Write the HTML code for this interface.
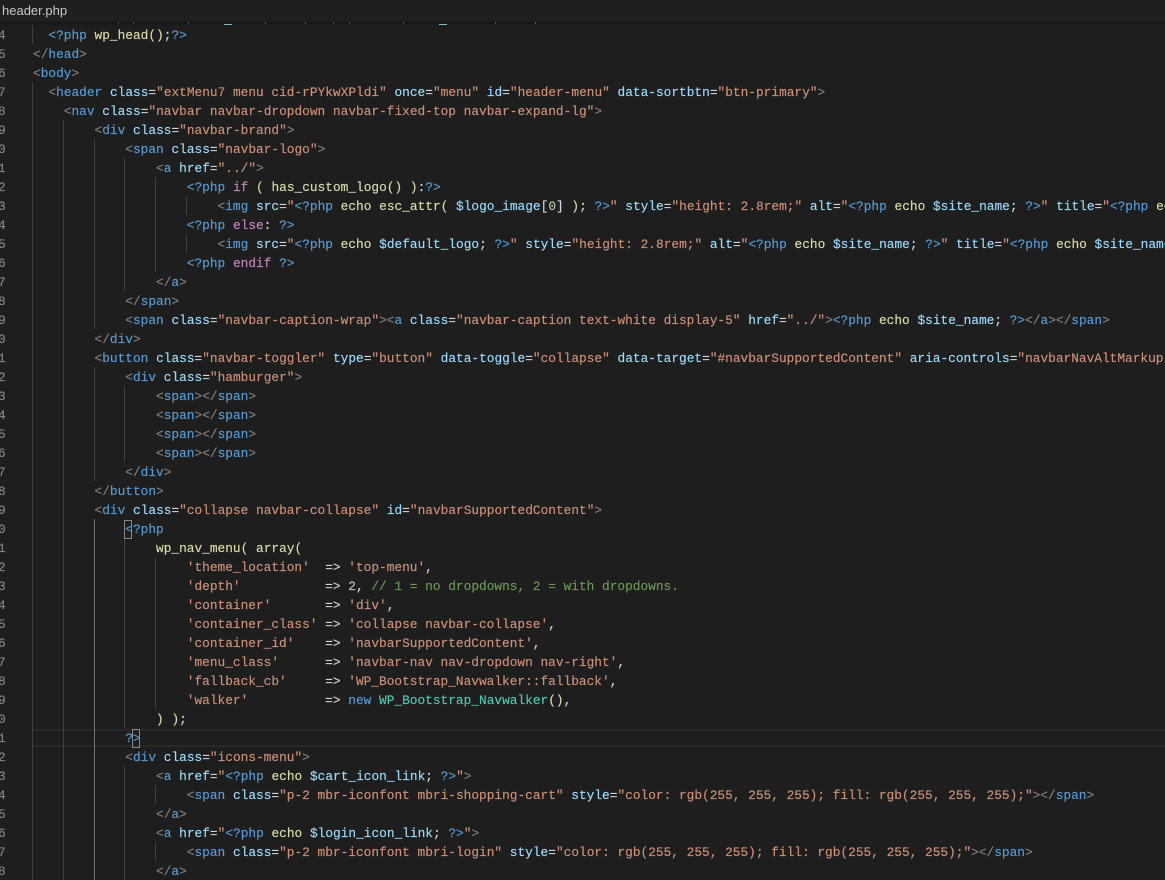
<!DOCTYPE html>
<html><head><meta charset="utf-8"><title>header.php</title>
<style>
html,body{margin:0;padding:0;width:1165px;height:880px;overflow:hidden;background:#1e1e1e}
#wrap{position:absolute;left:0;top:0;width:1165px;height:880px;overflow:hidden;background:#1e1e1e}
#tab{position:absolute;left:0;top:0;width:1165px;height:22px;background:#1f1f1f;color:#c8c8c8;font:13px/21px "Liberation Sans",sans-serif;padding-left:2px;box-sizing:border-box;z-index:5;box-shadow:0 1px 3px #111}
pre{position:absolute;margin:0;font-family:"Liberation Mono",monospace;font-size:12.825px;line-height:19px;color:#d4d4d4;-webkit-text-stroke:.15px currentColor}
#code{left:33px;top:-12.5px;width:1132px;overflow:hidden;height:892px;z-index:2}
#nums{left:-2px;top:6.5px;height:873px;overflow:hidden;color:#858585;z-index:2}
b{font-weight:normal}
.t{color:#569cd6}.a{color:#9cdcfe}.s{color:#ce9178}.p{color:#808080}.y{color:#dcdcaa}.k{color:#c586c0}.c{color:#6a9955}.n{color:#b5cea8}.g{color:#4ec9b0}
.gd{position:absolute;width:1px;background:#404040;z-index:1}
.ac{background:#707070}
.cur{position:absolute;left:33px;top:729px;width:1132px;height:18px;box-sizing:border-box;border-top:2px solid #282828;border-bottom:2px solid #282828;z-index:0}
.br{position:absolute;width:8px;height:19px;box-sizing:border-box;border:1px solid #888;z-index:3}
.bit{position:absolute;top:22px;height:2px;background:#569cd6;z-index:1}
</style></head><body><div id="wrap">
<div id="tab">header.php</div>
<div class="bit" style="left:118px;width:1px"></div><div class="bit" style="left:133px;width:1px"></div><div class="bit" style="left:188px;width:1px"></div><div class="bit" style="left:224px;width:8px;height:1px;top:24px;background:#9cdcfe"></div><div class="bit" style="left:265px;width:1px;background:#ce9178"></div><div class="bit" style="left:305px;width:1px;background:#ce9178"></div><div class="bit" style="left:333px;width:1px"></div><div class="bit" style="left:349px;width:1px"></div><div class="bit" style="left:403px;width:1px"></div><div class="bit" style="left:439px;width:8px;height:1px;top:24px;background:#9cdcfe"></div><div class="bit" style="left:495px;width:1px"></div><div class="bit" style="left:535px;width:1px;background:#ce9178"></div>
<div class="cur"></div>
<div class="gd" style="left:32px;top:25px;height:19px"></div>
<div class="gd" style="left:32px;top:82px;height:798px"></div>
<div class="gd" style="left:63px;top:120px;height:760px"></div>
<div class="gd" style="left:94px;top:139px;height:190px"></div>
<div class="gd" style="left:94px;top:367px;height:114px"></div>
<div class="gd ac" style="left:94px;top:519px;height:361px"></div>
<div class="gd" style="left:124px;top:158px;height:133px"></div>
<div class="gd" style="left:124px;top:386px;height:76px"></div>
<div class="gd" style="left:124px;top:538px;height:190px"></div>
<div class="gd" style="left:124px;top:766px;height:114px"></div>
<div class="gd" style="left:155px;top:177px;height:95px"></div>
<div class="gd" style="left:155px;top:557px;height:152px"></div>
<div class="gd" style="left:155px;top:785px;height:19px"></div>
<div class="gd" style="left:155px;top:842px;height:19px"></div>
<div class="gd" style="left:186px;top:196px;height:19px"></div>
<div class="gd" style="left:186px;top:234px;height:19px"></div>
<div class="br" style="left:124px;top:520px"></div>
<div class="br" style="left:132px;top:729px"></div>
<pre id="nums">

4
5
6
7
8
9
0
1
2
3
4
5
6
7
8
9
0
1
2
3
4
5
6
7
8
9
0
1
2
3
4
5
6
7
8
9
0
1
2
3
4
5
6
7
8</pre>
<pre id="code">


  <b class=t>&lt;?php</b> <b class=y>wp_head</b><b class=y>()</b>;<b class=t>?&gt;</b>
<b class=p>&lt;/</b><b class=t>head</b><b class=p>&gt;</b>
<b class=p>&lt;</b><b class=t>body</b><b class=p>&gt;</b>
  <b class=p>&lt;</b><b class=t>header</b> <b class=a>class</b>=<b class=s>"extMenu7 menu cid-rPYkwXPldi"</b> <b class=a>once</b>=<b class=s>"menu"</b> <b class=a>id</b>=<b class=s>"header-menu"</b> <b class=a>data-sortbtn</b>=<b class=s>"btn-primary"</b><b class=p>&gt;</b>
    <b class=p>&lt;</b><b class=t>nav</b> <b class=a>class</b>=<b class=s>"navbar navbar-dropdown navbar-fixed-top navbar-expand-lg"</b><b class=p>&gt;</b>
        <b class=p>&lt;</b><b class=t>div</b> <b class=a>class</b>=<b class=s>"navbar-brand"</b><b class=p>&gt;</b>
            <b class=p>&lt;</b><b class=t>span</b> <b class=a>class</b>=<b class=s>"navbar-logo"</b><b class=p>&gt;</b>
                <b class=p>&lt;</b><b class=t>a</b> <b class=a>href</b>=<b class=s>"../"</b><b class=p>&gt;</b>
                    <b class=t>&lt;?php</b> <b class=k>if</b> <b class=y>(</b> <b class=y>has_custom_logo()</b> <b class=y>)</b>:<b class=t>?&gt;</b>
                        <b class=p>&lt;</b><b class=t>img</b> <b class=a>src</b>=<b class=s>"</b><b class=t>&lt;?php</b> <b class=y>echo</b> <b class=y>esc_attr(</b> <b class=a>$logo_image</b>[<b class=n>0</b>] <b class=y>)</b>; <b class=t>?&gt;</b><b class=s>"</b> <b class=a>style</b>=<b class=s>"height: 2.8rem;"</b> <b class=a>alt</b>=<b class=s>"</b><b class=t>&lt;?php</b> <b class=y>echo</b> <b class=a>$site_name</b>; <b class=t>?&gt;</b><b class=s>"</b> <b class=a>title</b>=<b class=s>"</b><b class=t>&lt;?php</b> <b class=y>echo</b> <b class=a>$site_name</b>; <b class=t>?&gt;</b><b class=s>"</b><b class=p>&gt;</b>
                    <b class=t>&lt;?php</b> <b class=k>else</b>: <b class=t>?&gt;</b>
                        <b class=p>&lt;</b><b class=t>img</b> <b class=a>src</b>=<b class=s>"</b><b class=t>&lt;?php</b> <b class=y>echo</b> <b class=a>$default_logo</b>; <b class=t>?&gt;</b><b class=s>"</b> <b class=a>style</b>=<b class=s>"height: 2.8rem;"</b> <b class=a>alt</b>=<b class=s>"</b><b class=t>&lt;?php</b> <b class=y>echo</b> <b class=a>$site_name</b>; <b class=t>?&gt;</b><b class=s>"</b> <b class=a>title</b>=<b class=s>"</b><b class=t>&lt;?php</b> <b class=y>echo</b> <b class=a>$site_name</b>; <b class=t>?&gt;</b><b class=s>"</b><b class=p>&gt;</b>
                    <b class=t>&lt;?php</b> <b class=k>endif</b> <b class=t>?&gt;</b>
                <b class=p>&lt;/</b><b class=t>a</b><b class=p>&gt;</b>
            <b class=p>&lt;/</b><b class=t>span</b><b class=p>&gt;</b>
            <b class=p>&lt;</b><b class=t>span</b> <b class=a>class</b>=<b class=s>"navbar-caption-wrap"</b><b class=p>&gt;&lt;</b><b class=t>a</b> <b class=a>class</b>=<b class=s>"navbar-caption text-white display-5"</b> <b class=a>href</b>=<b class=s>"../"</b><b class=p>&gt;</b><b class=t>&lt;?php</b> <b class=y>echo</b> <b class=a>$site_name</b>; <b class=t>?&gt;</b><b class=p>&lt;/</b><b class=t>a</b><b class=p>&gt;&lt;/</b><b class=t>span</b><b class=p>&gt;</b>
        <b class=p>&lt;/</b><b class=t>div</b><b class=p>&gt;</b>
        <b class=p>&lt;</b><b class=t>button</b> <b class=a>class</b>=<b class=s>"navbar-toggler"</b> <b class=a>type</b>=<b class=s>"button"</b> <b class=a>data-toggle</b>=<b class=s>"collapse"</b> <b class=a>data-target</b>=<b class=s>"#navbarSupportedContent"</b> <b class=a>aria-controls</b>=<b class=s>"navbarNavAltMarkup"</b>
            <b class=p>&lt;</b><b class=t>div</b> <b class=a>class</b>=<b class=s>"hamburger"</b><b class=p>&gt;</b>
                <b class=p>&lt;</b><b class=t>span</b><b class=p>&gt;&lt;/</b><b class=t>span</b><b class=p>&gt;</b>
                <b class=p>&lt;</b><b class=t>span</b><b class=p>&gt;&lt;/</b><b class=t>span</b><b class=p>&gt;</b>
                <b class=p>&lt;</b><b class=t>span</b><b class=p>&gt;&lt;/</b><b class=t>span</b><b class=p>&gt;</b>
                <b class=p>&lt;</b><b class=t>span</b><b class=p>&gt;&lt;/</b><b class=t>span</b><b class=p>&gt;</b>
            <b class=p>&lt;/</b><b class=t>div</b><b class=p>&gt;</b>
        <b class=p>&lt;/</b><b class=t>button</b><b class=p>&gt;</b>
        <b class=p>&lt;</b><b class=t>div</b> <b class=a>class</b>=<b class=s>"collapse navbar-collapse"</b> <b class=a>id</b>=<b class=s>"navbarSupportedContent"</b><b class=p>&gt;</b>
            <b class=t>&lt;?php</b>
                <b class=y>wp_nav_menu(</b> <b class=y>array(</b>
                    <b class=s>'theme_location'</b>  =&gt; <b class=s>'top-menu'</b>,
                    <b class=s>'depth'</b>           =&gt; <b class=n>2</b>, <b class=c>// 1 = no dropdowns, 2 = with dropdowns.</b>
                    <b class=s>'container'</b>       =&gt; <b class=s>'div'</b>,
                    <b class=s>'container_class'</b> =&gt; <b class=s>'collapse navbar-collapse'</b>,
                    <b class=s>'container_id'</b>    =&gt; <b class=s>'navbarSupportedContent'</b>,
                    <b class=s>'menu_class'</b>      =&gt; <b class=s>'navbar-nav nav-dropdown nav-right'</b>,
                    <b class=s>'fallback_cb'</b>     =&gt; <b class=s>'WP_Bootstrap_Navwalker::fallback'</b>,
                    <b class=s>'walker'</b>          =&gt; <b class=t>new</b> <b class=g>WP_Bootstrap_Navwalker</b><b class=y>()</b>,
                <b class=y>)</b> <b class=y>)</b>;
            <b class=t>?&gt;</b>
            <b class=p>&lt;</b><b class=t>div</b> <b class=a>class</b>=<b class=s>"icons-menu"</b><b class=p>&gt;</b>
                <b class=p>&lt;</b><b class=t>a</b> <b class=a>href</b>=<b class=s>"</b><b class=t>&lt;?php</b> <b class=y>echo</b> <b class=a>$cart_icon_link</b>; <b class=t>?&gt;</b><b class=s>"</b><b class=p>&gt;</b>
                    <b class=p>&lt;</b><b class=t>span</b> <b class=a>class</b>=<b class=s>"p-2 mbr-iconfont mbri-shopping-cart"</b> <b class=a>style</b>=<b class=s>"color: rgb(255, 255, 255); fill: rgb(255, 255, 255);"</b><b class=p>&gt;&lt;/</b><b class=t>span</b><b class=p>&gt;</b>
                <b class=p>&lt;/</b><b class=t>a</b><b class=p>&gt;</b>
                <b class=p>&lt;</b><b class=t>a</b> <b class=a>href</b>=<b class=s>"</b><b class=t>&lt;?php</b> <b class=y>echo</b> <b class=a>$login_icon_link</b>; <b class=t>?&gt;</b><b class=s>"</b><b class=p>&gt;</b>
                    <b class=p>&lt;</b><b class=t>span</b> <b class=a>class</b>=<b class=s>"p-2 mbr-iconfont mbri-login"</b> <b class=a>style</b>=<b class=s>"color: rgb(255, 255, 255); fill: rgb(255, 255, 255);"</b><b class=p>&gt;&lt;/</b><b class=t>span</b><b class=p>&gt;</b>
                <b class=p>&lt;/</b><b class=t>a</b><b class=p>&gt;</b></pre>
</div></body></html>
